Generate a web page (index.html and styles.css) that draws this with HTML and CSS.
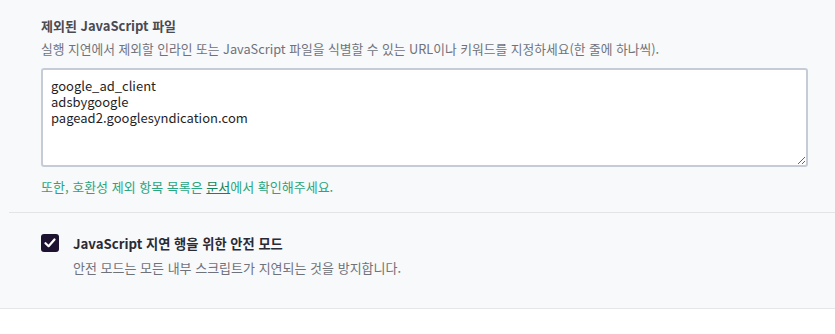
FILE: index.html
```html
<!DOCTYPE html>
<html lang="ko">
<head>
<meta charset="utf-8">
<link rel="stylesheet" href="styles.css">
</head>
<body>
<div class="panel">
  <div class="group">
    <div class="field">
      <div class="title">제외된 JavaScript 파일</div>
      <div class="desc">실행 지연에서 제외할 인라인 또는 JavaScript 파일을 식별할 수 있는 URL이나 키워드를 지정하세요(한 줄에 하나씩).</div>
      <textarea class="box">google_ad_client
adsbygoogle
pagead2.googlesyndication.com</textarea>
      <div class="note">또한, 호환성 제외 항목 목록은 <a href="#">문서</a>에서 확인해주세요.</div>
    </div>
    <div class="option">
      <span class="check"><svg width="12" height="10" viewBox="0 0 12 10"><path d="M1.5 5.2 L4.6 8.2 L10.5 1.5" fill="none" stroke="#fff" stroke-width="2.2" stroke-linecap="round" stroke-linejoin="round"/></svg></span>
      <div class="opt-text">
        <div class="opt-title">JavaScript 지연 행을 위한 안전 모드</div>
        <div class="opt-desc">안전 모드는 모든 내부 스크립트가 지연되는 것을 방지합니다.</div>
      </div>
    </div>
  </div>
</div>
</body>
</html>
```
FILE: styles.css
```css
html, body {
  margin: 0;
  padding: 0;
  background: #ffffff;
  font-family: "Noto Sans CJK KR", "Noto Sans", sans-serif;
}
.panel {
  background: #f8f9fb;
  border-bottom: 1px solid #e4e6ea;
  height: 309px;
  box-sizing: border-box;
}
.group {
  margin-left: 9px;
}
.field {
  padding: 16px 27px 0 32px;
  height: 213px;
  box-sizing: border-box;
  border-bottom: 1px solid #e2e4e8;
}
.title {
  font-size: 13px;
  font-weight: 700;
  color: #4a4a52;
  line-height: 20px;
}
.desc {
  font-size: 12.75px;
  color: #70727a;
  line-height: 20px;
  margin-top: 3px;
}
.box {
  display: block;
  width: 100%;
  height: 99px;
  box-sizing: border-box;
  margin-top: 9px;
  border: 2px solid #c5ccd6;
  border-radius: 3px;
  background: #fff;
  padding: 8px 8px;
  font-family: "Noto Sans CJK KR", "Noto Sans", sans-serif;
  font-size: 13px;
  line-height: 16px;
  color: #1f1f28;
  resize: vertical;
  outline: none;
}
.note {
  margin-top: 10px;
  font-size: 13px;
  line-height: 20px;
  color: #2aa57e;
}
.note a {
  color: #13835e;
  text-decoration: underline;
}
.option {
  display: flex;
  gap: 14px;
  padding: 21px 0 0 32px;
}
.check {
  width: 18px;
  height: 18px;
  border-radius: 3px;
  background: #1d1331;
  display: flex;
  align-items: center;
  justify-content: center;
  margin-top: 0;
}
.opt-title {
  font-size: 13.25px;
  font-weight: 700;
  color: #2a2a35;
  line-height: 20px;
}
.opt-desc {
  margin-top: 4px;
  font-size: 13px;
  color: #70727a;
  line-height: 20px;
}
```
